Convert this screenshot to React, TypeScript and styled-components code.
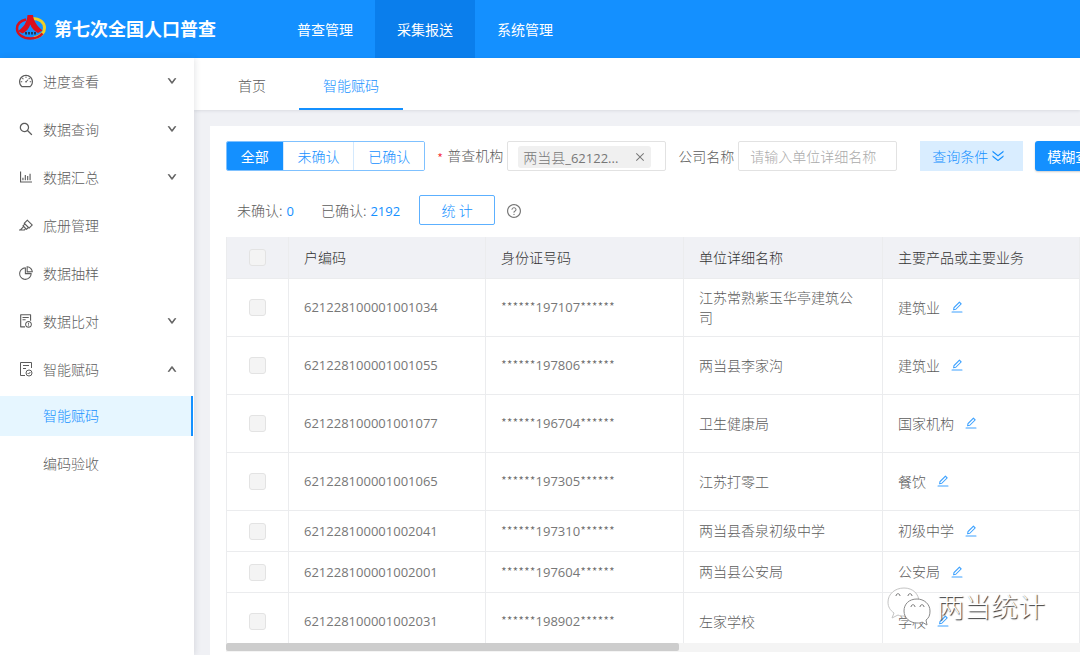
import React from 'react';
import styled, { createGlobalStyle, css } from 'styled-components';
import {
  AiOutlineBarChart,
  AiOutlineClose,
  AiOutlineDashboard,
  AiOutlineDoubleRight,
  AiOutlineDown,
  AiOutlineEdit,
  AiOutlineException,
  AiOutlineHighlight,
  AiOutlinePieChart,
  AiOutlineQuestionCircle,
  AiOutlineSearch,
  AiOutlineUp,
} from 'react-icons/ai';

const blue = '#1490ff';
const line = '#ebecee';
const text = '#5c5c5c';

const GlobalStyle = createGlobalStyle`
  *, *::before, *::after { box-sizing: border-box; }
  body {
    margin: 0;
    overflow: hidden;
    color: ${text};
    font: 300 14px/20px "Noto Sans CJK SC", sans-serif;
  }
  button, input { font: inherit; }
  ul { list-style: none; margin: 0; padding: 0; }
  a { color: inherit; text-decoration: none; }
`;

const Page = styled.div`
  display: flex;
  flex-direction: column;
  height: 100vh;
  overflow: hidden;
  background: #f0f1f5;
`;

const Header = styled.header`
  display: flex;
  flex: none;
  height: 58px;
  color: #fff;
  background: ${blue};
`;

const Brand = styled.div`
  display: flex;
  align-items: center;
  gap: 7px;
  width: 275px;
  padding: 0 0 2px 15px;
`;

const BrandName = styled.h1`
  margin: 0;
  font-size: 18px;
  line-height: 24px;
  font-weight: 700;
`;

const TopNav = styled.nav`
  display: flex;
`;

const TopLink = styled.a<{ $active?: boolean }>`
  padding: 19px 22px;
  font-weight: 400;
  background: ${(p) => (p.$active ? '#0a7eec' : 'transparent')};
`;

const Body = styled.div`
  display: flex;
  flex: 1;
  min-height: 0;
`;

const Sidebar = styled.aside`
  z-index: 1;
  flex: none;
  width: 194px;
  padding-top: 3px;
  background: #fff;
  box-shadow: 1px 0 6px rgba(30, 40, 60, 0.12);
`;

const Menu = styled.ul`
  display: flex;
  flex-direction: column;
  gap: 8px;
`;

const SubMenu = styled(Menu)`
  margin-top: 7px;
`;

const MenuLink = styled.a`
  display: flex;
  align-items: center;
  gap: 9px;
  height: 40px;
  padding: 0 17px 0 18px;

  svg { flex: none; }
`;

const MenuText = styled.span`
  flex: 1;
  padding-bottom: 1px;
`;

const SubLink = styled.a<{ $active?: boolean }>`
  display: flex;
  align-items: center;
  height: 40px;
  padding: 0 0 2px 43px;
  margin-right: 1px;
  ${(p) =>
    p.$active &&
    css`
      color: ${blue};
      background: #e6f6ff;
      border-right: 2px solid ${blue};
    `}
`;

const Main = styled.main`
  display: flex;
  flex: 1;
  flex-direction: column;
  min-width: 0;
`;

const Tabs = styled.nav`
  display: flex;
  flex: none;
  gap: 9px;
  height: 52px;
  padding-left: 20px;
  background: #fff;
  box-shadow: 0 1px 3px rgba(30, 40, 60, 0.1);
`;

const Tab = styled.a<{ $active?: boolean }>`
  padding: 17px 24px 0;
  color: ${(p) => (p.$active ? blue : text)};
  border-bottom: 2px solid ${(p) => (p.$active ? blue : 'transparent')};
`;

const Panel = styled.section`
  display: flex;
  flex: 1;
  flex-direction: column;
  min-height: 0;
  margin: 16px 0 0 16px;
  padding: 15px 0 3px 16px;
  overflow: hidden;
  background: #fff;
`;

const Filters = styled.form`
  display: flex;
  flex: none;
  align-items: center;
  height: 30px;
  white-space: nowrap;
`;

const Segments = styled.div`
  display: flex;
  flex: none;
  width: 199px;
  height: 30px;
  border: 1px solid #7fc1ff;
  border-radius: 2px;
  overflow: hidden;
`;

const Segment = styled.button<{ $active?: boolean }>`
  flex: auto;
  padding: 0;
  border: 0;
  border-left: 1px solid #d4e9fd;
  color: ${(p) => (p.$active ? '#fff' : blue)};
  font-weight: ${(p) => (p.$active ? 400 : 300)};
  background: ${(p) => (p.$active ? blue : '#fff')};

  &:first-child { border-left: 0; }
`;

const Label = styled.label<{ $required?: boolean }>`
  margin: 0 4px 0 12px;

  ${(p) =>
    p.$required &&
    css`
      &::before {
        content: '*';
        margin-right: 4px;
        color: #f5222d;
        vertical-align: -3px;
      }
    `}
`;

const fieldBox = css`
  flex: none;
  width: 159px;
  height: 30px;
  border: 1px solid #e2e2e2;
  border-radius: 2px;
  background: #fff;
`;

const TagField = styled.div`
  ${fieldBox}
  padding: 4px 10px;
`;

const Tag = styled.span`
  display: flex;
  align-items: center;
  justify-content: space-between;
  width: 133px;
  height: 22px;
  padding: 0 5px;
  color: #777;
  border-radius: 3px;
  background: #f0f0f0;
`;

const TagRemove = styled.button`
  display: flex;
  padding: 0;
  border: 0;
  color: #777;
  background: none;
`;

const TextField = styled.input`
  ${fieldBox}
  padding: 0 11px;

  &::placeholder { color: #aaa; opacity: 1; }
`;

const ConditionButton = styled.button`
  display: flex;
  flex: none;
  align-items: center;
  gap: 2px;
  height: 30px;
  margin-left: 23px;
  padding: 0 17px 0 12px;
  border: 0;
  color: ${blue};
  background: #d9edff;

  svg { transform: rotate(90deg); }
`;

const SearchButton = styled.button`
  flex: none;
  height: 30px;
  margin-left: 12px;
  padding: 0 12px;
  border: 0;
  border-radius: 3px;
  color: #fff;
  font-weight: 400;
  background: ${blue};
  box-shadow: 0 1px 2px rgba(0, 0, 0, 0.2);
`;

const Summary = styled.div`
  display: flex;
  flex: none;
  align-items: center;
  height: 30px;
  margin: 24px 0 12px;
  padding-left: 11px;
`;

const Count = styled.span`
  margin-right: 27px;
`;

const Num = styled.span`
  color: #777;
  font-family: "Open Sans", sans-serif;
  font-size: 13px;
  font-weight: 400;
`;

const CountValue = styled(Num)`
  margin-left: 4px;
  color: ${blue};
`;

const OutlineButton = styled.button`
  width: 76px;
  height: 30px;
  margin: 0 11px 0 -8px;
  padding: 0;
  border: 1px solid #5cb0ff;
  border-radius: 2px;
  color: ${blue};
  background: #fff;
`;

const TableArea = styled.div`
  flex: 1;
  min-height: 0;
  overflow: hidden;
`;

const Table = styled.table`
  width: 100%;
  min-width: 854px;
  table-layout: fixed;
  border-collapse: separate;
  border-spacing: 0;
  border-left: 1px solid ${line};
`;

const Col = styled.col<{ $w?: number }>`
  width: ${(p) => (p.$w ? `${p.$w}px` : 'auto')};
`;

const Th = styled.th`
  height: 42px;
  padding: 0 15px 1px;
  color: #333;
  font-weight: 300;
  text-align: left;
  background: #f0f1f5;
  border: solid ${line};
  border-width: 0 1px 1px 0;
`;

const Row = styled.tr<{ $compact?: boolean }>`
  height: ${(p) => (p.$compact ? 41 : 58)}px;
`;

const Td = styled.td`
  padding: 0 24px 2px 15px;
  border: solid ${line};
  border-width: 0 1px 1px 0;
`;

const CheckCell = styled(Td)`
  padding: 0;
`;

const Check = styled.input`
  display: block;
  width: 17px;
  height: 17px;
  margin: 0 auto;
  appearance: none;
  border: 1px solid #e3e3e3;
  border-radius: 3px;
  background: #f4f4f4;
`;

const Stars = styled.span`
  font-size: 13px;
`;

const Product = styled.div`
  display: flex;
  align-items: center;
  gap: 10px;
`;

const EditButton = styled.button`
  display: flex;
  padding: 1px 0 0;
  border: 0;
  color: #3ea2ff;
  background: none;
`;

const HelpIcon = styled(AiOutlineQuestionCircle)`
  margin-top: 2px;
  color: #777;
`;

const ScrollTrack = styled.div`
  flex: none;
  height: 9px;
  background: #f4f4f4;
`;

const ScrollThumb = styled.div`
  width: 53%;
  height: 8px;
  border-radius: 2px;
  background: #cdcdcd;
`;

const Watermark = styled.div`
  position: absolute;
  right: 35px;
  bottom: 29px;
  z-index: 2;
  display: flex;
  align-items: center;
  gap: 6px;
  color: #fff;
  font-size: 27px;
  line-height: 40px;
  text-shadow: 1px 1px 1px #333;
  pointer-events: none;
`;

const Logo = () => (
  <svg width="32" height="28" viewBox="0 0 32 28" aria-hidden="true">
    <path d="M17 4.500C25 4.500 29.500 8.500 29.500 14S25 22.500 19 24" fill="none" stroke="#f0cf25" strokeWidth="3" />
    <path d="M11 5.500C5 7 2 10.500 2 14.500c0 6 6 10 13.500 10 5 0 9-1.500 12-5" fill="none" stroke="#d4121f" strokeWidth="2.500" />
    <path d="M12.500 1h5.500c.5 6 4 11 9.500 15.500L23 19c-4-2-6.500-5-7.700-8.500C14 14.500 11.500 17.500 7.500 19.500L3 17c6-4 9-9 9.500-16z" fill="#dc0f1c" />
    <path d="M10 18h2v2.500h-2zm3 0h2v2.500h-2zm3 0h2v2.500h-2zm3 0h2v2.500h-2z" fill="#24385c" />
  </svg>
);

const WeChatMark = () => (
  <svg width="44" height="40" viewBox="0 0 44 40" fill="#fff" stroke="#8a8a8a" strokeWidth="1" aria-hidden="true">
    <path d="M17 2C8 2 1 8 1 16c0 5 2 8 6 11l-2 5 6-3c2 1 4 1 6 1 9 0 15-6 15-14S26 2 17 2z" stroke="#c4c4c4" />
    <path d="M30 13c-8 0-13 5-13 12s6 12 13 12c2 0 4 0 5-1l5 3-1-5c3-2 4-5 4-9 0-7-6-12-13-12z" />
    <path d="M9 10c0-3 4-3 4 0M21 10c0-3 4-3 4 0M24 21c0-3 4-3 4 0M33 21c0-3 4-3 4 0" fill="none" stroke="#777" />
  </svg>
);

const CheckedSheet = ({ size }: { size: number }) => (
  <svg width={size} height={size} viewBox="0 0 16 16" fill="none" stroke="currentColor" aria-hidden="true">
    <path d="M7 14.500H2.500v-13h11V7M5 4.500h6M5 7.500h3" />
    <circle cx="11" cy="12" r="3" />
    <path d="M9.600 12l1 1 1.800-2" />
  </svg>
);

const menu = [
  { label: '进度查看', Icon: AiOutlineDashboard, Arrow: AiOutlineDown },
  { label: '数据查询', Icon: AiOutlineSearch, Arrow: AiOutlineDown },
  { label: '数据汇总', Icon: AiOutlineBarChart, Arrow: AiOutlineDown },
  { label: '底册管理', Icon: AiOutlineHighlight },
  { label: '数据抽样', Icon: AiOutlinePieChart },
  { label: '数据比对', Icon: AiOutlineException, Arrow: AiOutlineDown },
  { label: '智能赋码', Icon: CheckedSheet, Arrow: AiOutlineUp, open: true },
];

const rows = [
  { code: '621228100001001034', id: '197107', unit: '江苏常熟紫玉华亭建筑公司', product: '建筑业' },
  { code: '621228100001001055', id: '197806', unit: '两当县李家沟', product: '建筑业' },
  { code: '621228100001001077', id: '196704', unit: '卫生健康局', product: '国家机构' },
  { code: '621228100001001065', id: '197305', unit: '江苏打零工', product: '餐饮' },
  { code: '621228100001002041', id: '197310', unit: '两当县香泉初级中学', product: '初级中学', compact: true },
  { code: '621228100001002001', id: '197604', unit: '两当县公安局', product: '公安局', compact: true },
  { code: '621228100001002031', id: '198902', unit: '左家学校', product: '学校' },
];

export default function App() {
  return (
    <Page>
      <GlobalStyle />
      <Header>
        <Brand>
          <Logo />
          <BrandName>第七次全国人口普查</BrandName>
        </Brand>
        <TopNav>
          <TopLink href="#survey">普查管理</TopLink>
          <TopLink href="#collect" $active>采集报送</TopLink>
          <TopLink href="#system">系统管理</TopLink>
        </TopNav>
      </Header>
      <Body>
        <Sidebar>
          <Menu>
            {menu.map(({ label, Icon, Arrow, open }) => (
              <li key={label}>
                <MenuLink href="#menu">
                  <Icon size={16} />
                  <MenuText>{label}</MenuText>
                  {Arrow && <Arrow size={10} strokeWidth={90} stroke="currentColor" />}
                </MenuLink>
                {open && (
                  <SubMenu>
                    <li><SubLink href="#coding" $active>智能赋码</SubLink></li>
                    <li><SubLink href="#review">编码验收</SubLink></li>
                  </SubMenu>
                )}
              </li>
            ))}
          </Menu>
        </Sidebar>
        <Main>
          <Tabs>
            <Tab href="#home">首页</Tab>
            <Tab href="#coding" $active>智能赋码</Tab>
          </Tabs>
          <Panel>
            <Filters>
              <Segments>
                <Segment type="button" $active>全部</Segment>
                <Segment type="button">未确认</Segment>
                <Segment type="button">已确认</Segment>
              </Segments>
              <Label id="org" $required>普查机构</Label>
              <TagField role="group" aria-labelledby="org">
                <Tag>
                  <span>两当县<Num>_62122...</Num></span>
                  <TagRemove type="button" aria-label="移除"><AiOutlineClose size={12} /></TagRemove>
                </Tag>
              </TagField>
              <Label htmlFor="company">公司名称</Label>
              <TextField id="company" placeholder="请输入单位详细名称" />
              <ConditionButton type="button">
                查询条件<AiOutlineDoubleRight size={16} />
              </ConditionButton>
              <SearchButton type="button">模糊查询</SearchButton>
            </Filters>
            <Summary>
              <Count>未确认:<CountValue>0</CountValue></Count>
              <Count>已确认:<CountValue>2192</CountValue></Count>
              <OutlineButton type="button">统 计</OutlineButton>
              <HelpIcon size={16} />
            </Summary>
            <TableArea>
              <Table>
                <colgroup>
                  <Col $w={62} />
                  <Col $w={197} />
                  <Col $w={198} />
                  <Col $w={199} />
                  <Col />
                </colgroup>
                <thead>
                  <tr>
                    <Th><Check type="checkbox" aria-label="全选" disabled /></Th>
                    <Th>户编码</Th>
                    <Th>身份证号码</Th>
                    <Th>单位详细名称</Th>
                    <Th>主要产品或主要业务</Th>
                  </tr>
                </thead>
                <tbody>
                  {rows.map((r) => (
                    <Row key={r.code} $compact={r.compact}>
                      <CheckCell><Check type="checkbox" aria-label={r.code} disabled /></CheckCell>
                      <Td><Num>{r.code}</Num></Td>
                      <Td><Stars>******</Stars><Num>{r.id}</Num><Stars>******</Stars></Td>
                      <Td>{r.unit}</Td>
                      <Td>
                        <Product>
                          {r.product}
                          <EditButton type="button" aria-label="编辑"><AiOutlineEdit size={14} /></EditButton>
                        </Product>
                      </Td>
                    </Row>
                  ))}
                </tbody>
              </Table>
            </TableArea>
            <ScrollTrack><ScrollThumb /></ScrollTrack>
          </Panel>
        </Main>
      </Body>
      <Watermark>
        <WeChatMark />
        两当统计
      </Watermark>
    </Page>
  );
}
